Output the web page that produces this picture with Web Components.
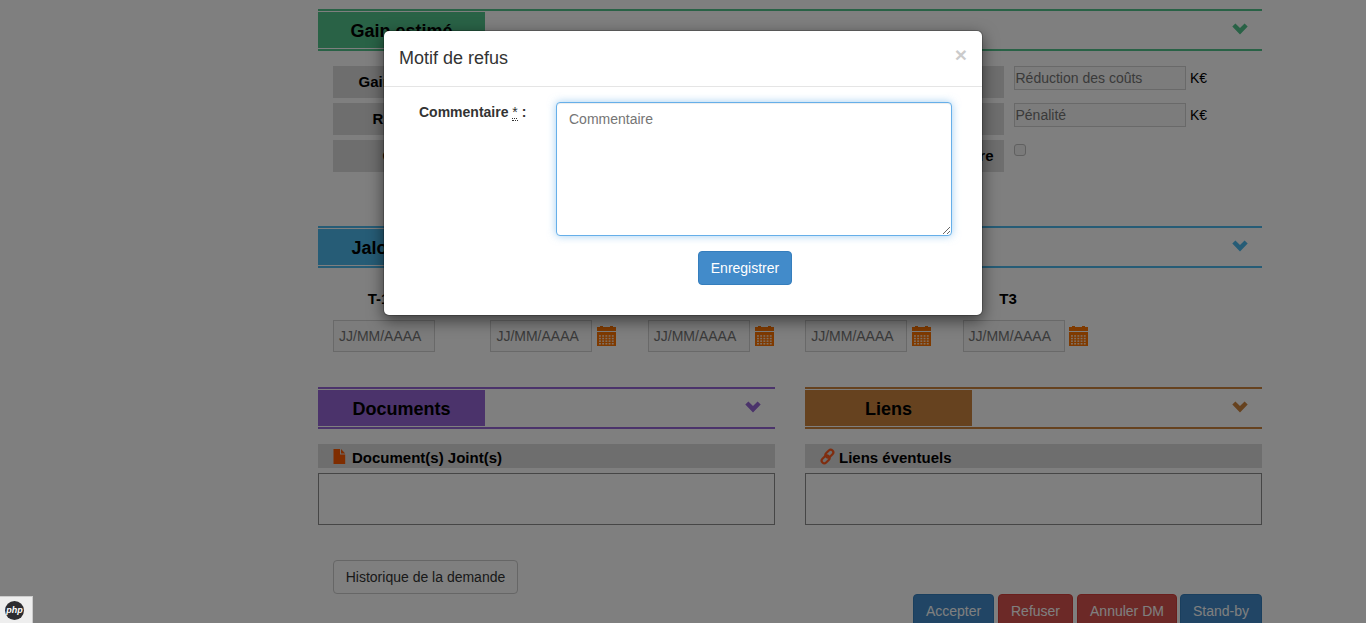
<!DOCTYPE html>
<html lang="fr"><head><meta charset="utf-8"><title>Demande</title>
<style>html,body{margin:0;height:623px;overflow:hidden;background:#fff}body{font:14px/20px "Liberation Sans",Arial,sans-serif;color:#000}</style></head>
<body><demande-page></demande-page>
<script>
const define=(name,markup,setup)=>{
  const t=document.createElement('template');t.innerHTML='<style>*{box-sizing:border-box}'+markup;
  customElements.define(name,class extends HTMLElement{
    constructor(){super();this.attachShadow({mode:'open'}).append(t.content.cloneNode(true));}
    connectedCallback(){if(setup)setup(this,this.shadowRoot);}
  });
};
define('section-head',`:host{display:flex;box-sizing:border-box;height:42px;border:solid var(--tone);border-width:2px 0;padding:1px 0;justify-content:space-between}
.name{width:167px;height:36px;background:var(--tone);font-weight:bold;font-size:18px;line-height:38px;text-align:center;white-space:nowrap;padding-right:var(--shift,0)}
svg{margin:11px 14px 0 0;fill:var(--tone)}</style><div class="name"><slot></slot></div><svg width="16" height="12" viewBox="0 0 16 12"><path d="M.3 3.6 3.4.5 8 5 12.6.5l3.1 3.1L8 11.4z"/></svg>`);
define('row-label',`:host{display:block;box-sizing:border-box;height:32px;background:#dcdcdc;font-weight:bold;font-size:15px;line-height:32px;white-space:nowrap;overflow:hidden}</style><slot></slot>`);
define('text-field',`:host{display:block;box-sizing:border-box;width:172px;height:24px;border:1px solid #d2d2d2;background:#f8f8f8;color:#757575;line-height:22px;padding-left:.5px;white-space:nowrap}:host([date]){width:102px;height:32px;padding-left:5px;line-height:30px}</style><slot></slot>`);
define('calendar-icon',`:host{display:block;width:19px;height:20px}svg{display:block}</style><svg width="19" height="20" fill="#ff7400"><path d="M0 1h3V0h3v1h7V0h3v1h3v4H0zM0 6h19v14H0z"/><g class="holes" fill="#fff" opacity=".8"></g></svg>`,(h,r)=>{
  const g=r.querySelector('.holes');if(g.children.length)return;
  for(let y=0;y<4;y++)for(let x=0;x<5;x++){const e=document.createElementNS('http://www.w3.org/2000/svg','rect');
    e.setAttribute('x',2+x*3.2);e.setAttribute('y',9.2+y*2.6);e.setAttribute('width',1.9);e.setAttribute('height',1.5);g.append(e);}
});
define('date-cell',`:host{display:block}b{display:block;width:91px;text-align:center;font-size:15px;height:20px;line-height:21px;margin-bottom:12px}div{display:flex;gap:4.8px}calendar-icon{margin-top:6px}:host([plain]) calendar-icon{display:none}:host([last]) div{gap:4px}</style><b><slot></slot></b><div><text-field date>JJ/MM/AAAA</text-field><calendar-icon></calendar-icon></div>`);
define('action-button',`:host{display:block;box-sizing:border-box;height:34px;border:1px solid #357ebd;background:#428bca;color:#fff;border-radius:4px;text-align:center;line-height:32px;white-space:nowrap}
:host([kind=danger]){background:#d9534f;border-color:#d43f3a}:host([kind=plain]){background:#fff;border-color:#ccc;color:#333}</style><slot></slot>`);
define('file-panel',`:host{display:block}.bar{display:flex;height:24px;background:#dcdcdc;margin:15px 0 5px;padding-left:15px;font-weight:bold;font-size:15px;line-height:28px}.box{height:52px;border:1px solid #8c8c8c}::slotted(svg){flex:none}</style>
<slot name="head"></slot><div class="bar"><slot name="icon"></slot><slot></slot></div><div class="box"></div>`);
define('refusal-dialog',`:host{display:block;box-sizing:border-box;width:600px;height:286px;background:#fff;background-clip:padding-box;border:1px solid rgba(0,0,0,.2);border-radius:6px;box-shadow:0 5px 15px rgba(0,0,0,.5);color:#333}
header{display:flex;justify-content:space-between;height:56px;border-bottom:1px solid #e5e5e5;padding:14px 15px 0;font-size:18px;line-height:26px}
.x{font-size:21px;font-weight:bold;line-height:19px;opacity:.2;color:#000}
.row{display:flex;padding:15px 30px 0 35px;height:149px}
label{width:137px;font-weight:bold}abbr{text-decoration:underline dotted 1px;text-underline-offset:1px;border-bottom:1px dotted #333;font-weight:normal;display:inline-block;line-height:16px}
textarea{display:block;width:396px;height:134px;resize:vertical;margin:0;border:1px solid #66afe9;border-radius:4px;box-shadow:inset 0 1px 1px rgba(0,0,0,.075),0 0 8px rgba(102,175,233,.6);font:14px/20px "Liberation Sans",Arial,sans-serif;padding:6px 12px;outline:0}
textarea::placeholder{color:#757575}
action-button{width:94px;margin:15px 0 0 314px}</style>
<header><span>Motif de refus</span><span class="x">×</span></header><div class="row"><label>Commentaire <abbr>*</abbr> :</label><textarea placeholder="Commentaire"></textarea></div><action-button>Enregistrer</action-button>`);
define('php-badge',`:host{display:block;box-sizing:border-box;width:33px;height:27px;background:#eee;border:solid #ccc;border-width:1px 1px 0 0;padding:4px 0 0 5px}div{width:19px;height:19px;border-radius:50%;background:#2d2c30;color:#fff;font:italic bold 9px/18px "Liberation Sans",Arial,sans-serif;text-align:center}</style><div>php</div>`);
define('demande-page',`:host{display:block;position:relative;width:1366px;height:623px;overflow:hidden}
main{margin-left:318px;width:944px;padding-top:9px}
.gain{display:grid;grid-template-columns:160px 511px 182px auto;row-gap:5px;padding:15px 0 0 15px;height:175px;align-content:start}
.gain row-label:nth-of-type(even){text-align:right;padding-right:10.5px;margin-left:5px}
.gain text-field{margin-left:10px}
.unit{padding:2px 0 0 4px}
.check{width:12px;height:12px;border:1px solid #c0c0c0;border-radius:3px;background:#f4f4f4;margin:4px 0 0 10px}
.dates{display:grid;grid-template-columns:repeat(5,157.4px);padding:20px 0 0 15px;height:119px}
.two{display:grid;grid-template-columns:457px 457px;column-gap:30px}
.history{width:185px;margin:35px 0 0 15px}
footer{display:flex;justify-content:flex-end}
.shade{position:absolute;inset:0;background:rgba(0,0,0,.5)}
refusal-dialog{position:absolute;left:383px;top:30px}php-badge{position:absolute;left:0;bottom:0}</style>
<main><section-head style="--tone:#52c48c">Gain estimé</section-head>
<div class="gain">
<row-label style="padding-left:25.5px">Gain</row-label><row-label></row-label><text-field>Réduction des coûts</text-field><span class="unit">K€</span>
<row-label style="padding-left:39.5px">R</row-label><row-label></row-label><text-field>Pénalité</text-field><span class="unit">K€</span>
<row-label style="padding-left:49.5px">O</row-label><row-label>re</row-label><div class="check"></div><span></span></div>
<section-head style="--tone:#4cb8ec;--shift:3px">Jalons clés</section-head>
<div class="dates"><date-cell plain>T-1</date-cell><date-cell>T0</date-cell><date-cell>T1</date-cell><date-cell>T2</date-cell><date-cell last>T3</date-cell></div>
<div class="two"><file-panel><section-head slot="head" style="--tone:#9666d6">Documents</section-head><svg slot="icon" width="19" height="24" fill="#ff5a00"><path d="M.5 5H7v5.5h5.2V20H.5zM8 5l4.2 4.5H8z"/></svg>Document(s) Joint(s)</file-panel>
<file-panel><section-head slot="head" style="--tone:#cd853f">Liens</section-head><svg slot="icon" width="19" height="24" fill="none" stroke="#ff5a1e" stroke-width="2.2"><g transform="rotate(-45 7.5 12.5)"><rect x="-.3" y="10.6" width="8.8" height="5.2" rx="2.6"/><rect x="6.5" y="9.2" width="8.8" height="5.2" rx="2.6"/></g></svg>Liens éventuels</file-panel></div>
<action-button class="history" kind="plain">Historique de la demande</action-button>
<footer><action-button style="width:81px;margin-right:4px">Accepter</action-button><action-button kind="danger" style="width:75px;margin-right:4px">Refuser</action-button><action-button kind="danger" style="width:100px;margin-right:3px">Annuler DM</action-button><action-button style="width:82px">Stand-by</action-button></footer></main>
<div class="shade"></div><refusal-dialog></refusal-dialog><php-badge></php-badge>`);
</script></body></html>
